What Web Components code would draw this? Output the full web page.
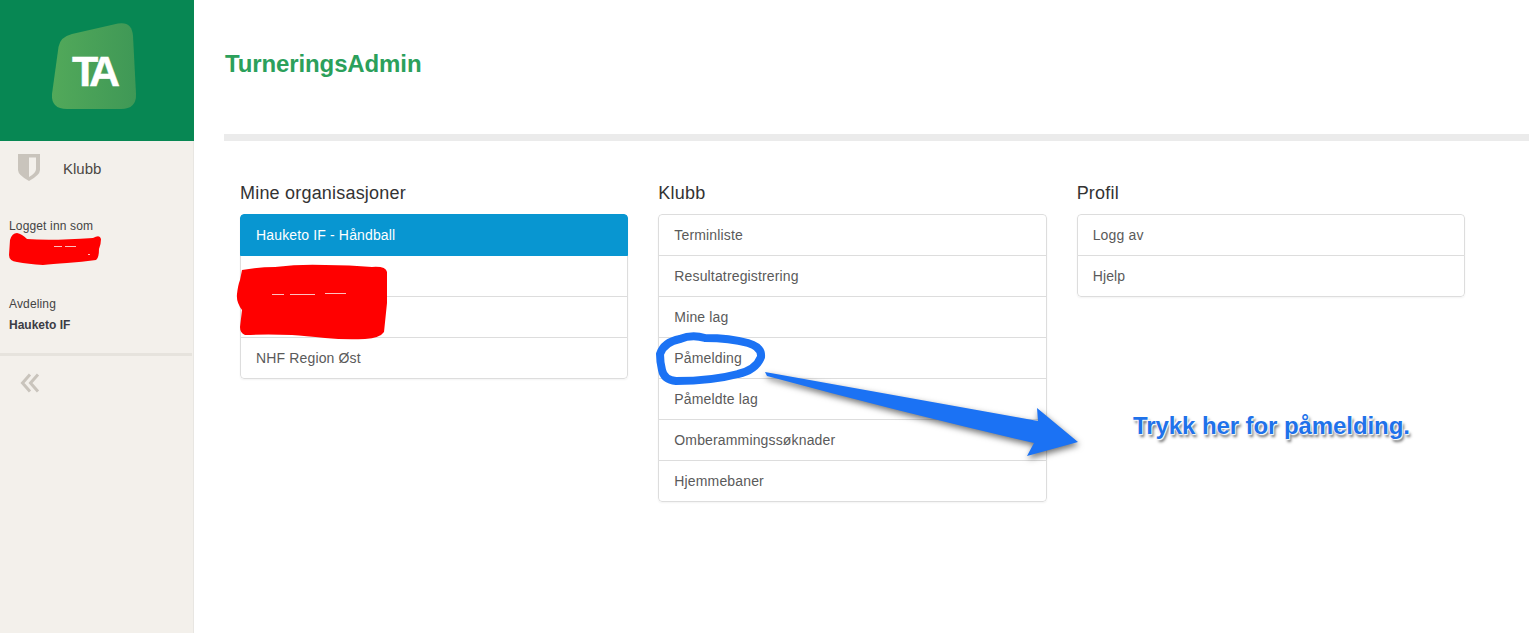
<!DOCTYPE html>
<html lang="no">
<head>
<meta charset="utf-8">
<title>TurneringsAdmin</title>
<style>
html, body { margin: 0; height: 100%; overflow: hidden; background: #fff; }
body { font: 14px/20px "Liberation Sans", Arial, sans-serif; color: #333; }
</style>
</head>
<body>

<ta-app>
    <ta-sidebar slot="side"></ta-sidebar>
    <ta-panel heading="Mine organisasjoner">
        <ta-item active>Hauketo IF - Håndball</ta-item>
        <ta-item>&nbsp;</ta-item>
        <ta-item>&nbsp;</ta-item>
        <ta-item>NHF Region Øst</ta-item>
    </ta-panel>
    <ta-panel heading="Klubb">
        <ta-item>Terminliste</ta-item>
        <ta-item>Resultatregistrering</ta-item>
        <ta-item>Mine lag</ta-item>
        <ta-item>Påmelding</ta-item>
        <ta-item>Påmeldte lag</ta-item>
        <ta-item>Omberammingssøknader</ta-item>
        <ta-item>Hjemmebaner</ta-item>
    </ta-panel>
    <ta-panel heading="Profil">
        <ta-item>Logg av</ta-item>
        <ta-item>Hjelp</ta-item>
    </ta-panel>
</ta-app>
<ta-markup></ta-markup>

<script>

'use strict';

customElements.define('ta-app', class extends HTMLElement {

    constructor () {
        super();
        this.attachShadow({mode: 'open'}).innerHTML = `
            <style>
                :host { display: flex; height: 633px; }
                main { flex: 1; min-width: 0; }
                header { height: 134px; box-sizing: border-box; padding: 50px 0 0 31px; }
                h1 { margin: 0; font: bold 24px/28px "Liberation Sans", Arial, sans-serif; color: #2ba05b; letter-spacing: -0.12px; }
                #bar { height: 7px; margin: 0 1px 0 30px; background: #ebebeb; }
                #cols {
                    display: grid; grid-template-columns: repeat(3, 388.33px); gap: 30px;
                    padding: 41px 0 0 46px;
                }
            </style>
            <slot name="side"></slot>
            <main>
                <header><h1>TurneringsAdmin</h1></header>
                <div id="bar"></div>
                <div id="cols"><slot></slot></div>
            </main>
        `;
    }
});

customElements.define('ta-sidebar', class extends HTMLElement {

    constructor () {
        super();
        this.attachShadow({mode: 'open'}).innerHTML = `
            <style>
                :host {
                    display: block; flex: none; width: 194px; height: 633px; box-sizing: border-box;
                    background: #f3f0eb; border-right: 1px solid #e8e6e2;
                    font-size: 12px; line-height: 16px; color: #444;
                }
                #brand { height: 141px; width: 194px; background: #078753; display: flex; }
                #brand svg { display: block; }
                #logo-text {
                    font: bold 43px "Liberation Sans", Arial, sans-serif; letter-spacing: -6px;
                    fill: #fff; stroke: #fff; stroke-width: 0.4;
                }
                nav { display: flex; align-items: center; height: 56px; }
                nav svg { margin: 0 0 5px 17px; flex: none; }
                nav span { margin-left: 22px; font-size: 15px; color: #4b4743; }
                #info { padding: 21px 0 21px 9px; height: 156px; box-sizing: border-box; letter-spacing: 0.15px; }
                #info p { margin: 0; }
                #dept { margin-top: 62px !important; }
                #name { margin-top: 5px !important; font-weight: bold; color: #3c3c44; letter-spacing: 0; }
                #rule { height: 3px; background: #e6e3dd; margin-right: 1px; }
                #collapse { display: block; margin: 17px 0 0 20px; }
            </style>
            <div id="brand">
                <svg width="194" height="141" viewBox="0 0 194 141">
                    <defs>
                        <linearGradient id="lg" x1="0" y1="0" x2="1" y2="0">
                            <stop offset="0" stop-color="#52a95a"/>
                            <stop offset="1" stop-color="#3f9856"/>
                        </linearGradient>
                    </defs>
                    <path fill="url(#lg)" d="M72 34 L118 23.500 Q132 21 133 36 L136 94 Q136.500 109 121 109 L67 109 Q51 109 52 94 L58.500 47 Q60 37 72 34 Z"/>
                    <text id="logo-text" x="72" y="85.500">TA</text>
                </svg>
            </div>
            <nav>
                <svg width="24" height="28" viewBox="0 0 24 28">
                    <path fill="#c9c4bc" d="M1 1 H23 V17 Q23 22 12 28 Q1 22 1 17 Z"/>
                    <path fill="#f3f0eb" d="M12 4.500 H19 V16 Q19 20 12 24 Z"/>
                </svg>
                <span>Klubb</span>
            </nav>
            <div id="info">
                <p>Logget inn som</p>
                <p id="dept">Avdeling</p>
                <p id="name">Hauketo IF</p>
            </div>
            <div id="rule"></div>
            <svg id="collapse" width="20" height="20" viewBox="0 0 20 20" fill="none" stroke="#c9c4bc" stroke-width="3">
                <path d="M10 1.500 L2.500 10 L10 18.500"/>
                <path d="M18 1.500 L10.500 10 L18 18.500"/>
            </svg>
        `;
    }
});

customElements.define('ta-panel', class extends HTMLElement {

    static get observedAttributes () {
        return ['heading'];
    }

    constructor () {
        super();
        this.attachShadow({mode: 'open'}).innerHTML = `
            <style>
                :host { display: block; }
                h2 { margin: 0 0 10px; font: 18px/22px "Liberation Sans", Arial, sans-serif; color: #333; letter-spacing: 0.2px; }
                #list { border-radius: 4px; overflow: hidden; box-shadow: 0 1px 2px rgba(0,0,0,0.05); }
            </style>
            <h2></h2>
            <div id="list"><slot></slot></div>
        `;
    }

    attributeChangedCallback (name, oldValue, newValue) {
        this.shadowRoot.querySelector('h2').textContent = newValue;
    }
});

customElements.define('ta-item', class extends HTMLElement {

    constructor () {
        super();
        this.attachShadow({mode: 'open'}).innerHTML = `
            <style>
                :host {
                    display: block; padding: 10px 15px; margin-bottom: -1px;
                    border: 1px solid #ddd; background: #fff; color: #5a5a5a;
                    font-size: 14px; line-height: 20px; letter-spacing: 0.15px;
                }
                :host(:last-child) { margin-bottom: 0; border-radius: 0 0 4px 4px; }
                :host(:first-child) { border-radius: 4px 4px 0 0; }
                :host([active]) { background: #0896d1; border-color: #0896d1; color: #fff; position: relative; }
            </style>
            <slot></slot>
        `;
    }
});

// red scribbles and the blue arrow that were painted on top of the screenshot
customElements.define('ta-markup', class extends HTMLElement {

    constructor () {
        super();
        this.attachShadow({mode: 'open'}).innerHTML = `
            <style>
                :host { position: absolute; top: 0; left: 0; width: 1530px; height: 633px; pointer-events: none; }
                svg { position: absolute; top: 0; left: 0; }
                #arrow { filter: drop-shadow(1px 3px 3px rgba(0,0,0,0.55)); }
                #note {
                    position: absolute; left: 1133px; top: 411px; white-space: nowrap;
                    font: bold 24px/30px "Liberation Sans", Arial, sans-serif; color: #1f72ea; letter-spacing: -0.08px;
                    text-shadow: 0 0 2px #fff, 1px 1px 1px #fff, -1px -1px 1px #fff,
                                 2px 3px 3px rgba(0,0,0,0.6);
                }
            </style>
            <svg width="1530" height="633" viewBox="0 0 1530 633">
                <g fill="#ff0000">
                    <path d="M10 240 Q12 233 17 233 Q22 234 27 239 Q50 241 93 238 Q100 234 101 239 Q101 244 99 249 Q99 258 96 260 Q82 262 67 263 Q52 264 43 265 Q28 264 17 262 Q9 261 9 255 Z"/>
                    <path d="M242 270 Q258 267 275 267 Q300 264 325 265 Q350 265 372 267 Q386 266 387 272 L387 303 L384 332 Q380 338 365 339 Q345 340 325 338 Q305 336 292 335 Q268 334 245 335 Q240 333 240 327 L242 310 Q236 302 237 294 Q238 285 240 280 Z"/>
                </g>
                <g fill="#fff" opacity="0.75">
                    <path d="M54 246 H62 V247 H54 Z M65 246 H76 V247 H65 Z M88 254 H90 V255 H88 Z"/>
                    <path d="M272 294 H284 V295 H272 Z M290 294 H315 V295 H290 Z M325 293 H346 V294 H325 Z"/>
                </g>
                <path fill="none" stroke="#1b72f4" stroke-width="8" stroke-linejoin="round"
                      d="M660 354 Q664 342 680 339 Q692 334 705 338 Q730 338 748 343 Q762 347 761 357 Q756 370 738 374 Q712 381 676 381 Q664 380 662 370 Q660 362 660 354 Z"/>
                <path id="arrow" fill="#1b72f4" d="M765 372 L1038 421 L1037 408 L1078 442 L1027 456 L1034 443 Q900 412 767 376 Z"/>
            </svg>
            <div id="note">Trykk her for påmelding.</div>
        `;
    }
});

</script>
</body>
</html>
